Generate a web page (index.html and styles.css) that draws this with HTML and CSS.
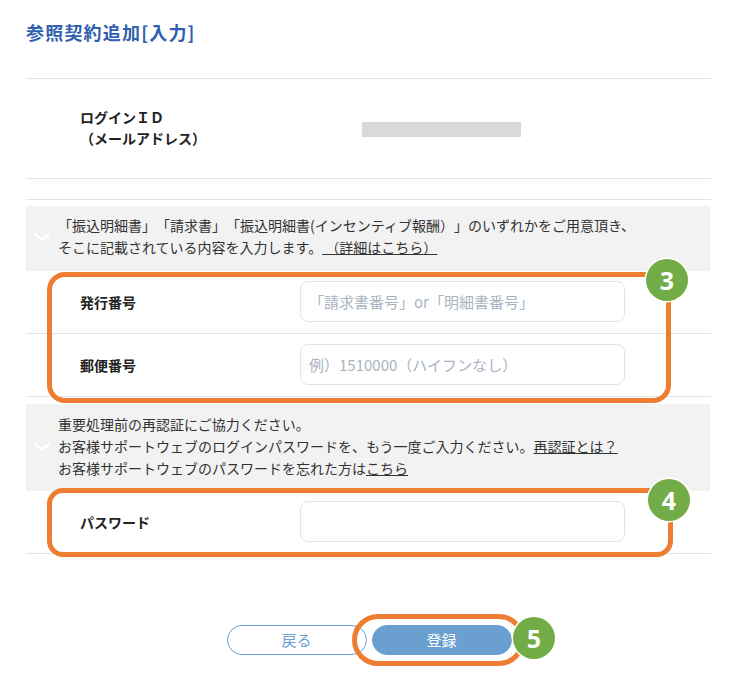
FILE: index.html
```html
<!DOCTYPE html>
<html lang="ja">
<head>
<meta charset="utf-8">
<title>参照契約追加[入力]</title>
<link rel="stylesheet" href="styles.css">
</head>
<body>
<div class="page">
  <h1 class="title">参照契約追加[入力]</h1>
  <div class="table">
    <div class="row row-id">
      <div class="label">ログインＩＤ<br>（メールアドレス）</div>
      <div class="value"><span class="mask"></span></div>
    </div>
    <div class="row row-empty"></div>
    <div class="note note1">
      <div class="chev"><svg width="16" height="9" viewBox="0 0 16 9"><path d="M1.5 1.5 L8 6.5 L14.5 1.5" fill="none" stroke="#fff" stroke-width="2.6" stroke-linecap="round" stroke-linejoin="round"/></svg></div>
      <div class="note-text">「振込明細書」「請求書」「振込明細書(インセンティブ報酬）」のいずれかをご用意頂き、<br>そこに記載されている内容を入力します。<a class="link" href="#">&nbsp;（詳細はこちら）</a></div>
    </div>
    <div class="row field">
      <div class="flabel">発行番号</div>
      <div class="input"><span class="ph">「請求書番号」or「明細書番号」</span></div>
    </div>
    <div class="row field">
      <div class="flabel">郵便番号</div>
      <div class="input"><span class="ph">例）1510000（ハイフンなし）</span></div>
    </div>
    <div class="note note2">
      <div class="chev"><svg width="16" height="9" viewBox="0 0 16 9"><path d="M1.5 1.5 L8 6.5 L14.5 1.5" fill="none" stroke="#fff" stroke-width="2.6" stroke-linecap="round" stroke-linejoin="round"/></svg></div>
      <div class="note-text">重要処理前の再認証にご協力ください。<br>お客様サポートウェブのログインパスワードを、もう一度ご入力ください。<a class="link" href="#">再認証とは？</a><br>お客様サポートウェブのパスワードを忘れた方は<a class="link" href="#">こちら</a></div>
    </div>
    <div class="row field">
      <div class="flabel">パスワード</div>
      <div class="input"></div>
    </div>
  </div>
  <div class="actions">
    <button class="btn btn-back">戻る</button>
    <button class="btn btn-submit">登録</button>
  </div>

  <div class="mark mark1"></div>
  <div class="mark mark2"></div>
  <div class="mark mark3"></div>
  <div class="badge badge3">3</div>
  <div class="badge badge4">4</div>
  <div class="badge badge5">5</div>
</div>
</body>
</html>
```

FILE: styles.css
```css
* { box-sizing: border-box; }
html, body { margin: 0; padding: 0; background: #fff; }
body {
  font-family: "Noto Sans CJK JP", "Noto Sans", sans-serif;
  color: #333;
  font-size: 14px;
  text-spacing-trim: space-all;
  font-feature-settings: normal;
}
.page {
  position: relative;
  width: 738px;
  height: 681px;
  padding: 0 27px 0 26px;
}
.title {
  margin: 0;
  padding-top: 20px;
  font-size: 18px;
  line-height: 24px;
  font-weight: bold;
  color: #2f5fae;
  letter-spacing: 1.2px;
}
.table {
  margin-top: 34px;
  border-top: 1px solid #e4e4e4;
}
.row {
  border-bottom: 1px solid #e4e4e4;
}
.row-id {
  height: 100px;
  display: flex;
  align-items: center;
  padding-bottom: 2px;
}
.row-id .label {
  width: 336px;
  padding-left: 54px;
  font-weight: bold;
  line-height: 21px;
  color: #222;
}
.mask {
  display: block;
  width: 159px;
  height: 15px;
  background: #d9d9d9;
  margin-top: 4px;
}
.row-empty { height: 21px; }
.note {
  display: flex;
  align-items: center;
  background: #f2f2f2;
  line-height: 22px;
  margin-right: 1px;
}
.note1 { margin-top: 6px; padding: 8px 0 13px; }
.note2 { margin-top: 7px; padding: 9px 0 12px; }
.chev {
  width: 32px;
  flex: none;
  display: flex;
  justify-content: center;
  padding-top: 2px;
}
.chev svg { display: block; }
.note-text { color: #333; }
.link { color: #333; text-decoration: underline; }
.field {
  display: flex;
  align-items: center;
  padding: 10px 0 11px;
}
.flabel {
  width: 274px;
  padding-left: 54px;
  font-weight: bold;
  color: #222;
}
.input {
  width: 325px;
  height: 41px;
  border: 1px solid #dde5f0;
  border-radius: 8px;
  display: flex;
  align-items: center;
  padding-left: 8px;
}
.ph { color: #a9b3bf; font-size: 15px; }
.actions {
  margin-top: 71px;
  display: flex;
  justify-content: center;
  gap: 5px;
  padding-left: 1px;
}
.btn {
  width: 140px;
  height: 30px;
  border-radius: 15px;
  font-family: "Noto Sans CJK JP", sans-serif;
  font-size: 15px;
  line-height: 28px;
  padding: 0;
}
.btn-back {
  background: #fff;
  border: 1px solid #6a9fcf;
  color: #6a9fcf;
}
.btn-submit {
  background: #6a9fcf;
  border: 1px solid #6a9fcf;
  color: #fff;
}
.mark {
  position: absolute;
  border: 5.5px solid #ed7d31;
}
.mark1 { left: 47px; top: 272px; width: 624px; height: 131px; border-radius: 18px; }
.mark2 { left: 47px; top: 488px; width: 626px; height: 69px; border-radius: 16px; }
.mark3 { left: 352px; top: 614px; width: 173px; height: 52px; border-radius: 26px; }
.badge {
  position: absolute;
  width: 42px;
  height: 42px;
  border-radius: 50%;
  background: #71ac47;
  box-shadow: 0 0 0 1.5px #fff;
  color: #fff;
  font-family: "Open Sans", "Liberation Sans", sans-serif;
  font-weight: bold;
  font-size: 25px;
  line-height: 42px;
  text-align: center;
}
.badge3 { left: 646px; top: 259px; }
.badge4 { left: 648px; top: 479px; }
.badge5 { left: 513px; top: 617px; }
```
